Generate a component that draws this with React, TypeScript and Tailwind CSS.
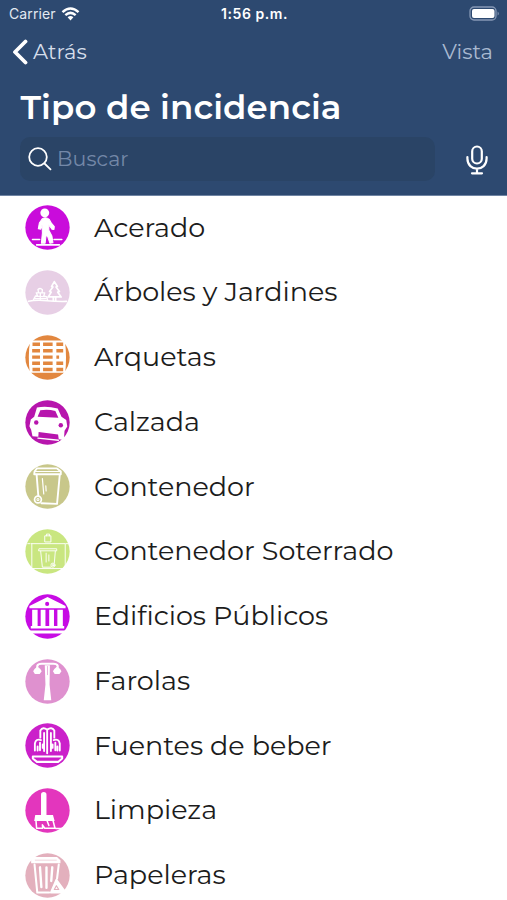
import type { ReactNode } from "react";

type Category = {
  name: string;
  color: string;
  icon: ReactNode;
};

/* Pictograms share a 132-unit box, the disc fills it entirely. */
const categories: Category[] = [
  {
    name: "Acerado",
    color: "#c90cdb",
    icon: (
      <>
        <circle cx="58" cy="23" r="13" fill="#fff" stroke="none" />
        <path d="M51 40Q62 34 71 42L78 54L86 63L85 72L79 71L70 58L70 74L79 91L82 111L73 112L67 94L62 88L59 112L48 112L51 82L50 59L46 71L39 70L42 53Z" fill="#fff" strokeWidth="3" />
        <path d="M22 101H43M85 101H108M34 117H101" strokeWidth="4.5" />
      </>
    ),
  },
  {
    name: "Árboles y Jardines",
    color: "#e7cfe5",
    icon: (
      <>
        <path d="M10 92Q32 87 64 90T122 92" strokeWidth="4.5" />
        <path d="M86 34L95 48L91 50L101 63L96 65L106 79H68L77 65L72 63L82 50L78 48ZM83 80V90M90 80V90" strokeWidth="5" />
        <path d="M25 87L31 76H37L33 67H40L38 57Q45 51 51 58L50 67H58L55 76L64 79L66 88M33 77L58 78M38 67H52M45 68V86M30 84H61" strokeWidth="4" />
      </>
    ),
  },
  {
    name: "Arquetas",
    color: "#e2873f",
    icon: (
      <>
        <path d="M15 16H117Q123 63 118 111H14Q8 63 15 16Z" fill="#fff" stroke="none" />
        <path d="M22 27H44M53 27H81M92 27H112M21 46H44M53 46H81M92 46H112M21 65H44M53 65H81M92 65H100M21 83H44M53 83H81M92 83H112M22 101H44M53 101H81M92 101H112" stroke="#e2873f" strokeWidth="10" strokeLinecap="butt" />
      </>
    ),
  },
  {
    name: "Calzada",
    color: "#b715ad",
    icon: (
      <>
        <path d="M35 22Q64 17 96 25L107 49L121 59L124 78L116 90L114 117L99 115L97 101L40 94L39 108L22 106L18 87L13 77L17 57L27 49Z" fill="#fff" stroke="none" />
        <path d="M45 30Q67 26 89 32L98 52L37 49Z" fill="#b715ad" stroke="none" />
        <circle cx="33" cy="66" r="6.5" fill="#b715ad" stroke="none" />
        <circle cx="105" cy="74" r="6.5" fill="#b715ad" stroke="none" />
        <path d="M38 112L98 118" strokeWidth="4" />
      </>
    ),
  },
  {
    name: "Contenedor",
    color: "#c8c78a",
    icon: (
      <>
        <path d="M28 22L35 13H94L105 22V30H27ZM34 31L39 93M102 31L94 117L48 115" strokeWidth="5.5" />
        <path d="M51 43L55 88M61 64L62 79M29 22H103" strokeWidth="3.5" />
        <circle cx="38" cy="104" r="10" fill="#c8c78a" strokeWidth="5" />
        <circle cx="38" cy="104" r="3" strokeWidth="3" />
      </>
    ),
  },
  {
    name: "Contenedor Soterrado",
    color: "#c9e680",
    icon: (
      <g strokeWidth="2.7">
        <path d="M19 43H117M20 43V116H118V43M59 20H76V38H59ZM63 20V15H72V20M8 43H15M121 43H127" />
        <path d="M42 58H93V64H41ZM46 65L51 112H76M89 65L86 100M62 71V97M70 76V94" />
        <circle cx="82" cy="106" r="6" />
        <circle cx="82" cy="106" r="2" />
      </g>
    ),
  },
  {
    name: "Edificios Públicos",
    color: "#c70be4",
    icon: (
      <>
        <path d="M66 9L119 35V42H13V35Z" fill="#fff" stroke="none" />
        <circle cx="65" cy="29" r="6" fill="#c70be4" stroke="none" />
        <path d="M21 46H37V94H21ZM46 46H60V94H46ZM71 46H85V94H71ZM95 46H111V94H95ZM17 94H115V101H17ZM11 107H121V116H11Z" fill="#fff" stroke="none" />
      </>
    ),
  },
  {
    name: "Farolas",
    color: "#df91cf",
    icon: (
      <>
        <path d="M36 25V20Q38 14 49 14H83Q94 14 96 20V25" strokeWidth="6" />
        <path d="M58 18H73L72 75L77 121H55L60 75Z" fill="#fff" stroke="none" />
        <path d="M36 22L45 29L49 36L43 44H29L24 36L28 29ZM94 22L103 29L107 36L101 44H87L82 36L86 29Z" fill="#fff" stroke="none" />
        <path d="M66 22V46" stroke="#df91cf" strokeWidth="2" />
      </>
    ),
  },
  {
    name: "Fuentes de beber",
    color: "#cb20ca",
    icon: (
      <>
        <path d="M65 89V20Q53 10 45 22V43M65 20Q78 10 86 22V43M47 50Q32 45 29 60V81M84 50Q99 45 102 60V81M44 58V80M56 29V82M76 29V82M89 58V80M37 69V81M95 69V81M52 63V73M81 63V73M65 39V46" strokeWidth="5.5" />
        <path d="M23 98H109V104L98 114H35L23 104Z" strokeWidth="6" />
      </>
    ),
  },
  {
    name: "Limpieza",
    color: "#e336bd",
    icon: (
      <>
        <path d="M55 20V78" strokeWidth="16" />
        <path d="M30 79H82L87 97H27Z" fill="#fff" stroke="none" />
        <path d="M32 93L34 118H52L51 108L58 118H88L82 95M65 97L70 110M90 119H107" strokeWidth="4.5" />
      </>
    ),
  },
  {
    name: "Papeleras",
    color: "#e3b0bd",
    icon: (
      <>
        <path d="M18 19L25 12H94L104 21V30H18Z" fill="#fff" stroke="none" />
        <path d="M28 34L36 116H71M99 34L94 75" strokeWidth="6" />
        <path d="M44 42L48 100M63 42V102M80 42L77 82" strokeWidth="7" />
        <path d="M92 79L76 116H119Z" fill="#fff" strokeWidth="6" />
        <path d="M92 96L86 107H99Z" stroke="#e3b0bd" strokeWidth="3.5" />
        <path d="M30 21H92" stroke="#e3b0bd" strokeWidth="1.5" />
      </>
    ),
  },
];

function CategoryIcon({ color, children }: { color: string; children: ReactNode }) {
  return (
    <svg
      viewBox="0 0 132 132"
      className="size-[45px] shrink-0"
      fill="none"
      stroke="#fff"
      strokeLinecap="round"
      strokeLinejoin="round"
      aria-hidden
    >
      <circle cx="66" cy="66" r="65" fill={color} stroke="none" />
      {children}
    </svg>
  );
}

function StatusBar() {
  return (
    <div className="grid h-7 grid-cols-3 items-center pr-[7px] pl-[9px] font-['Inter',sans-serif] text-[14px] leading-none text-[#e3e9f2]">
      <div className="flex items-center gap-[5px]">
        <span className="w-[47px] tracking-[0.1px]">Carrier</span>
        <svg viewBox="0 0 20 15" className="h-[14px] w-[19px]" fill="none" stroke="#fff" strokeWidth="2.6">
          <path d="M1.4 5.4Q10-2.3 18.6 5.4" />
          <path d="M4.5 8.8Q10 3.8 15.5 8.8" />
          <path d="M6.9 11Q10 8.2 13.1 11L10 14.5Z" fill="#fff" stroke="none" />
        </svg>
      </div>
      <span className="text-center font-semibold tracking-[0.55px] whitespace-nowrap text-white">1:56 p.m.</span>
      <svg viewBox="0 0 31 15" className="relative -top-px h-[15px] w-[31px] justify-self-end">
        <rect x="1" y="1" width="26" height="13" rx="4" fill="none" stroke="#8698b5" strokeWidth="1.3" />
        <rect x="3" y="3" width="22.5" height="9" rx="2" fill="#fff" />
        <path d="M28.6 5.4Q31 7.5 28.6 9.6Z" fill="#8698b5" />
      </svg>
    </div>
  );
}

export default function App() {
  return (
    <main className="h-[900px] w-[507px] overflow-hidden bg-white font-['Montserrat','Inter',sans-serif] text-[#1c1c1c]">
      <header className="h-[195.5px] border-b border-[#6f84a3] bg-[#2d4970]">
        <StatusBar />

        <nav className="flex h-[48px] items-center justify-between pr-[14px] pl-[12px] text-[21px]">
          <button type="button" className="flex items-center gap-[5px] text-[#d5deeb]">
            <svg viewBox="0 0 16 26" className="h-[26px] w-4" fill="none" stroke="#fff" strokeWidth="3.8" strokeLinecap="round" strokeLinejoin="round">
              <path d="M13.5 2.5L3 13L13.5 23.5" />
            </svg>
            <span>Atrás</span>
          </button>
          <button type="button" className="text-[#a9b9d1]">Vista</button>
        </nav>

        <h1 className="flex h-[61px] items-center pl-[20.5px] text-[34px] leading-none font-semibold tracking-[0.1px] whitespace-nowrap text-white">
          Tipo de incidencia
        </h1>

        <div className="flex items-center">
          <div className="ml-[20px] flex h-[44px] w-[415px] items-center rounded-[10px] bg-[#2a4466] pl-[8px]">
            <svg viewBox="0 0 24 24" className="size-6" fill="none" stroke="#fff" strokeWidth="1.8" strokeLinecap="round">
              <circle cx="10" cy="10" r="8.8" />
              <path d="M16.5 16.5L22.5 22.3" />
            </svg>
            <span className="pl-[5px] text-[20.5px] tracking-[0.1px] text-[#7488a8]">Buscar</span>
          </div>
          <svg viewBox="0 0 22 30" className="mt-[2px] ml-[31px] h-[30px] w-[22px]" fill="none" stroke="#fff" strokeWidth="2.2" strokeLinecap="round">
            <rect x="6.2" y="1.5" width="9.6" height="17" rx="4.8" />
            <path d="M1.4 12V13.5C1.4 27 20.6 27 20.6 13.5V12M11 23.5V28M6 28.3H16" />
          </svg>
        </div>
      </header>

      <ul>
        {categories.map((c) => (
          <li key={c.name} className="flex h-[64.75px] items-center pl-[25px]">
            <CategoryIcon color={c.color}>{c.icon}</CategoryIcon>
            <span className="pb-[1.5px] pl-[24px] text-[27px] leading-none tracking-[-0.03px] whitespace-nowrap [font-variant-ligatures:none]">
              {c.name}
            </span>
          </li>
        ))}
      </ul>
    </main>
  );
}
